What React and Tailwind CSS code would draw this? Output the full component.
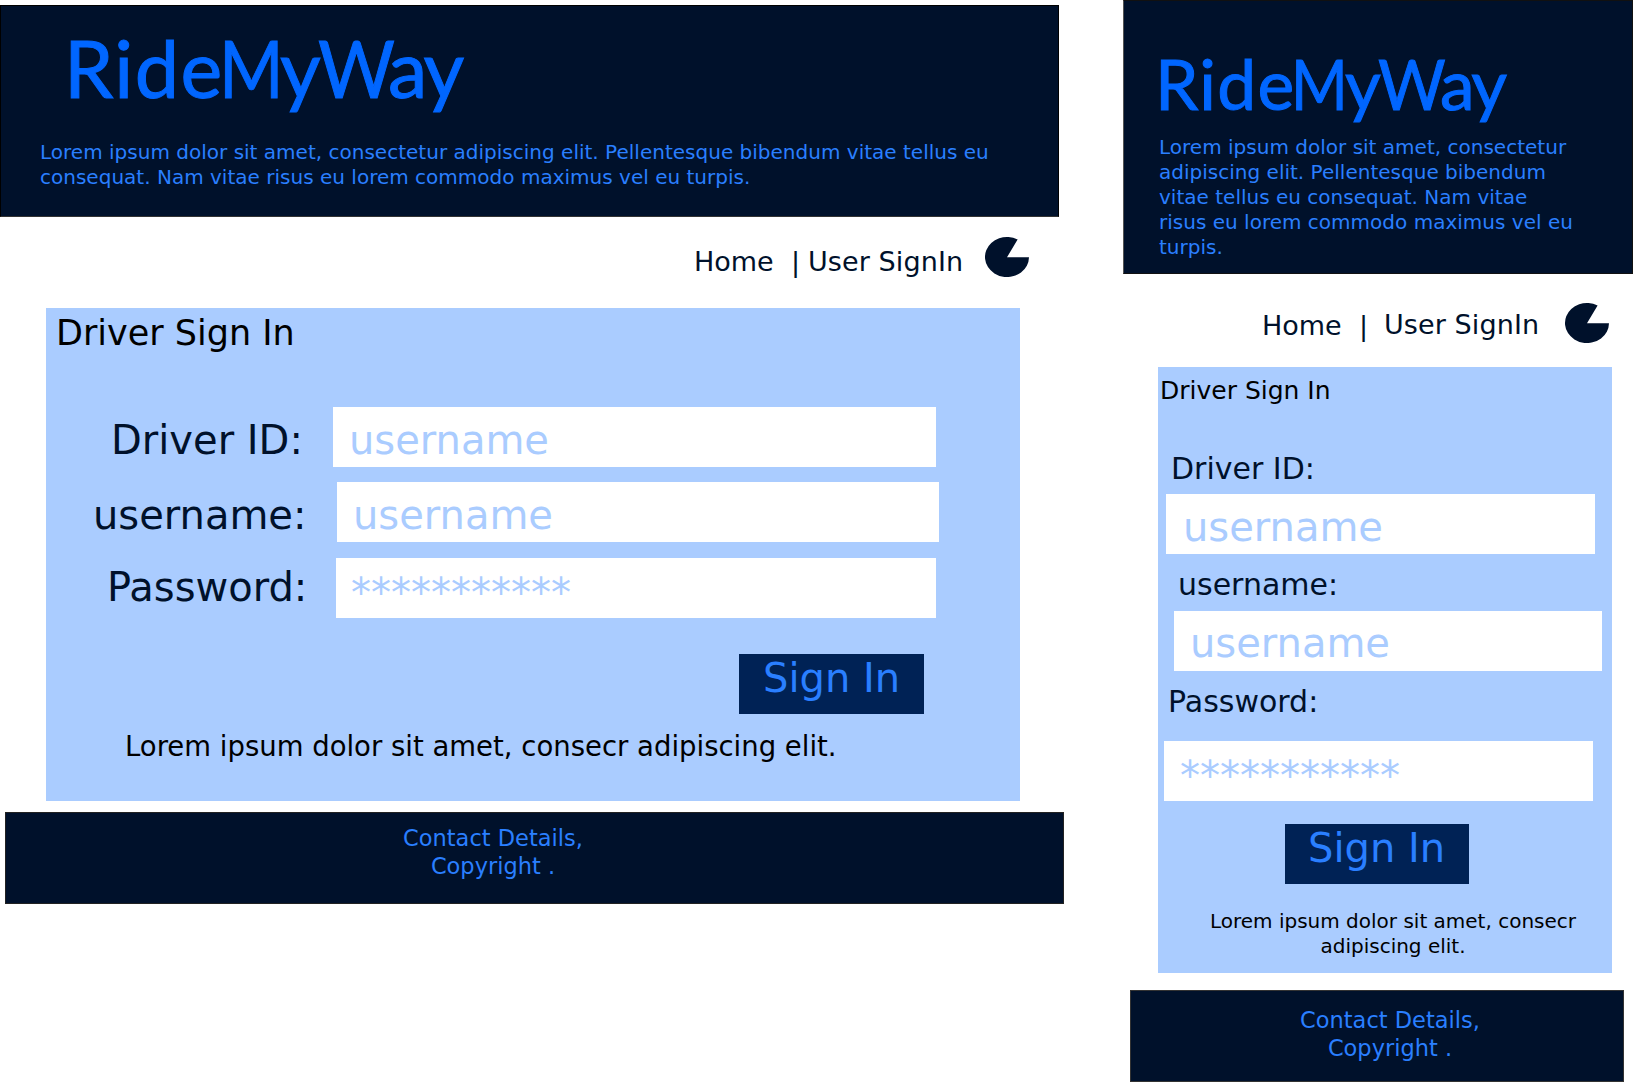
const LOREM =
  "Lorem ipsum dolor sit amet, consectetur adipiscing elit. Pellentesque bibendum vitae tellus eu consequat. Nam vitae risus eu lorem commodo maximus vel eu turpis.";

function PieIcon({ className }) {
  return (
    <svg className={className} width="44" height="40" viewBox="0 0 44 40">
      <path d="M22 20.3 L44 20.3 A22 20 0 1 1 32.6 2.5 Z" fill="#00112b" />
    </svg>
  );
}

function Logo({ className }) {
  return (
    <h1 className={`font-['Lato',sans-serif] text-[#0066ff] [-webkit-text-stroke:1px_#0066ff] ${className}`}>
      <span className="tracking-[0.018em]">Ride</span>
      <span className="mr-[-0.155em] ml-[-0.06em] inline-block origin-left scale-x-[0.88]">M</span>
      <span className="tracking-[-0.035em]">y</span>
      <span className="mr-[-0.15em] inline-block origin-left scale-x-[0.94]">W</span>
      <span className="tracking-[-0.035em]">ay</span>
    </h1>
  );
}

function Field({ className, textClass, children }) {
  return (
    <div className={`h-[60px] shrink-0 bg-white text-[40px] leading-[60px] text-[#aaccff] ${className}`}>
      <div className={textClass}>{children}</div>
    </div>
  );
}

function SignInButton({ className, textClass }) {
  return (
    <button
      className={`block h-[60px] bg-[#002255] text-left text-[40px] leading-[48px] text-[#2a7fff] ${className}`}
    >
      <span className={`block h-[60px] ${textClass}`}>Sign In</span>
    </button>
  );
}

function Desktop() {
  return (
    <section className="w-[1123px] shrink-0 pt-[5px]">
      <header className="h-[212px] w-[1059px] border border-black border-b-[#333] bg-[#00112b] pt-[22px]">
        <Logo className="h-[80px] pl-[63px] text-[79px] leading-[80px]" />
        <p className="mt-[32px] w-[1000px] pl-[39px] text-[20px] leading-[25px] tracking-[0.01px] text-[#2a7fff]">
          {LOREM}
        </p>
      </header>

      <nav className="flex h-[91px] pl-[694px] text-[27px] leading-[34px] text-[#00112b]">
        <a className="w-[97px] pt-[28px]">Home</a>
        <span className="w-[17px] pt-[28px]">|</span>
        <a className="w-[177px] pt-[28px] tracking-[0.1px] whitespace-nowrap">User SignIn</a>
        <PieIcon className="mt-[20px]" />
      </nav>

      <main className="ml-[46px] h-[493px] w-[973.5px] bg-[#aaccff] pt-[3px]">
        <h2 className="pl-[10px] text-[35px] leading-[44px] text-black">Driver Sign In</h2>
        <div className="mt-[52px] flex pl-[65px] text-[40px] leading-[60px] text-[#00112b]">
          <label className="w-[222px] pt-[3px]">Driver ID:</label>
          <Field className="w-[603px]" textClass="pt-[3px] pl-[16px]">username</Field>
        </div>
        <div className="mt-[12px] flex pl-[47px] text-[40px] leading-[60px] text-[#00112b]">
          <label className="w-[244px] pt-[3px]">username:</label>
          <Field className="w-[602px]" textClass="pt-[3px] pl-[16px]">username</Field>
        </div>
        <div className="mt-[13px] flex h-[60px] pl-[61px] text-[40px] leading-[60px] text-[#00112b]">
          <label className="-mt-px w-[229px]">Password:</label>
          <Field className="w-[600px]" textClass="pt-[5px] pl-[15px]">***********</Field>
        </div>
        <SignInButton className="mt-[36px] ml-[693px] w-[185px]" textClass="pl-[24px]" />
        <p className="mt-[15px] pl-[79px] text-[27.5px] leading-[35px] text-black">
          Lorem ipsum dolor sit amet, consecr adipiscing elit.
        </p>
      </main>

      <footer className="mt-[11px] ml-[5px] h-[92px] w-[1059px] border border-[#222] bg-[#00112b] pt-[11px] text-[22.5px] leading-[28px] text-[#2a7fff]">
        <div className="w-[974px] text-center">
          Contact Details,
          <br />
          Copyright .
        </div>
      </footer>
    </section>
  );
}

function Mobile() {
  return (
    <section className="w-[510px] shrink-0">
      <header className="h-[274px] border border-[#111] border-l-[#555] bg-[#00112b] pt-[47px]">
        <Logo className="h-[70px] pl-[31px] text-[69.5px] leading-[70px]" />
        <p className="mt-[17px] w-[455px] pl-[35px] text-[20px] leading-[25px] tracking-[0.01px] text-[#2a7fff]">
          {LOREM}
        </p>
      </header>

      <nav className="flex h-[93px] pl-[139px] text-[27px] leading-[34px] text-[#00112b]">
        <a className="w-[97px] pt-[35px]">Home</a>
        <span className="w-[25px] pt-[35px]">|</span>
        <a className="w-[181px] pt-[34px] tracking-[0.1px] whitespace-nowrap">User SignIn</a>
        <PieIcon className="mt-[29px]" />
      </nav>

      <main className="ml-[34.5px] h-[606px] w-[454.5px] bg-[#aaccff] pt-[8px] text-[#00112b]">
        <h2 className="pl-[2.5px] text-[25px] leading-[31px] text-black">Driver Sign In</h2>
        <label className="mt-[44px] block pl-[13.5px] text-[30px] leading-[38px]">Driver ID:</label>
        <Field className="mt-[6px] ml-[8.5px] w-[429px]" textClass="pt-[3px] pl-[17px]">username</Field>
        <label className="mt-[12px] block pl-[20.5px] text-[30px] leading-[38px]">username:</label>
        <Field className="mt-[7px] ml-[16.5px] w-[428px]" textClass="pt-[2px] pl-[16px]">username</Field>
        <label className="mt-[12px] block pl-[10.5px] text-[30px] leading-[38px]">Password:</label>
        <Field className="mt-[20px] ml-[6.5px] w-[429px]" textClass="pt-[5px] pl-[16px]">***********</Field>
        <SignInButton className="mt-[23px] ml-[127.5px] w-[184px]" textClass="pl-[23px]" />
        <p className="mt-[25px] ml-[35.5px] w-[400px] text-center text-[20px] leading-[25px] text-black">
          Lorem ipsum dolor sit amet, consecr
          <br />
          adipiscing elit.
        </p>
      </main>

      <footer className="mt-[17px] ml-[7px] h-[92px] w-[494px] border border-[#333] bg-[#00112b] pt-[15px] text-[22.5px] leading-[28px] text-[#2a7fff]">
        <div className="ml-[9px] w-[500px] text-center">
          Contact Details,
          <br />
          Copyright .
        </div>
      </footer>
    </section>
  );
}

export default function App() {
  return (
    <div className="flex h-[1082px] w-[1633px] overflow-hidden bg-white font-['DejaVu_Sans',sans-serif]">
      <Desktop />
      <Mobile />
    </div>
  );
}
